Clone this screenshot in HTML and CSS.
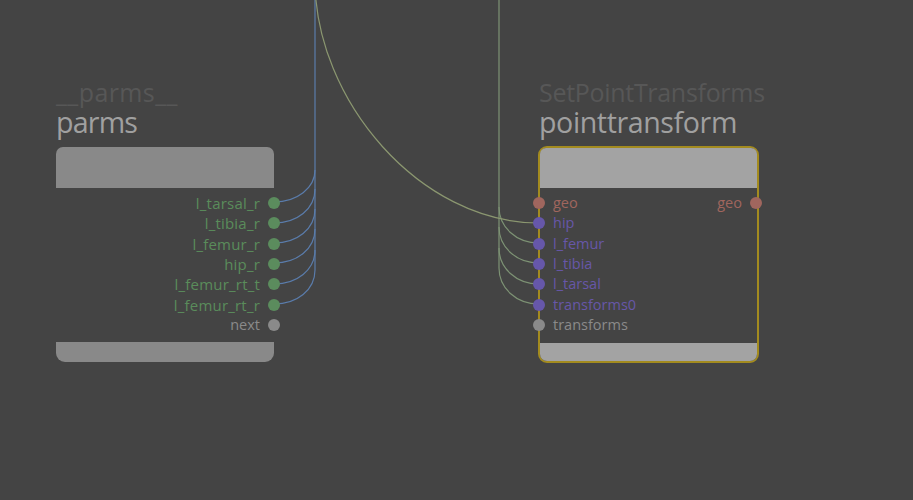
FILE: index.html
```html
<!DOCTYPE html>
<html>
<head>
<meta charset="utf-8">
<link rel="stylesheet" href="styles.css">
</head>
<body>
<div class="canvas">
  <svg class="wires" width="913" height="500" viewBox="0 0 913 500">
    <g class="wire-blue">
      <path d="M315,0 L315,170 C315,188 297,202 274,202"/>
      <path d="M315,170 L315,189 C315,209 297,223 274,223"/>
      <path d="M315,189 L315,209 C315,229 297,243 274,243"/>
      <path d="M315,209 L315,229 C315,249 297,263 274,263"/>
      <path d="M315,229 L315,250 C315,270 297,284 274,284"/>
      <path d="M315,250 L315,270 C315,290 297,304 274,304"/>
    </g>
    <g class="wire-green">
      <path d="M499,0 L499,207 C499,227 516,243 539,243"/>
      <path d="M499,207 L499,227 C499,247 516,263 539,263"/>
      <path d="M499,227 L499,248 C499,268 516,284 539,284"/>
      <path d="M499,248 L499,268 C499,288 516,304 539,304"/>
    </g>
    <path class="wire-hip" d="M315,-20 C315,100 420,223 539,223"/>
  </svg>

  <div class="node node-parms">
    <div class="node-type">__parms__</div>
    <div class="node-name">parms</div>
    <div class="node-body">
      <div class="node-head"></div>
      <div class="ports ports-out">
        <div class="port green">l_tarsal_r<span class="dot"></span></div>
        <div class="port green">l_tibia_r<span class="dot"></span></div>
        <div class="port green">l_femur_r<span class="dot"></span></div>
        <div class="port green">hip_r<span class="dot"></span></div>
        <div class="port green">l_femur_rt_t<span class="dot"></span></div>
        <div class="port green">l_femur_rt_r<span class="dot"></span></div>
        <div class="port grey">next<span class="dot"></span></div>
      </div>
      <div class="node-foot"></div>
    </div>
  </div>

  <div class="node node-pt">
    <div class="node-type">SetPointTransforms</div>
    <div class="node-name">pointtransform</div>
    <div class="node-body selected">
      <div class="node-head"></div>
      <div class="ports ports-in">
        <div class="port red"><span class="dot"></span>geo<span class="spacer"></span>geo<span class="dot dot-out"></span></div>
        <div class="port purple"><span class="dot"></span>hip</div>
        <div class="port purple"><span class="dot"></span>l_femur</div>
        <div class="port purple"><span class="dot"></span>l_tibia</div>
        <div class="port purple"><span class="dot"></span>l_tarsal</div>
        <div class="port purple"><span class="dot"></span>transforms0</div>
        <div class="port grey"><span class="dot"></span>transforms</div>
      </div>
      <div class="node-foot"></div>
    </div>
  </div>
</div>
</body>
</html>
```

FILE: styles.css
```css
html, body {
  margin: 0;
  padding: 0;
  background: #444444;
}
body {
  font-family: "Open Sans", "Noto Sans", sans-serif;
  overflow: hidden;
}
.canvas {
  position: relative;
  width: 913px;
  height: 500px;
  background: #444444;
  overflow: hidden;
}
.wires {
  position: absolute;
  left: 0;
  top: 0;
}
.wires path {
  fill: none;
  stroke-width: 1.2;
}
.wire-blue path { stroke: #5a7cab; }
.wire-green path { stroke: #7d9274; }
.wire-hip { stroke: #8b9770; }

.node {
  position: absolute;
  display: flex;
  flex-direction: column;
}
.node-parms {
  left: 56px;
  top: 77px;
  width: 218px;
}
.node-pt {
  left: 538px;
  top: 77px;
  width: 221px;
}
.node-type {
  font-size: 25px;
  line-height: 30px;
  height: 30px;
  color: #575757;
  white-space: nowrap;
  letter-spacing: -0.3px;
}
.node-parms .node-type {
  letter-spacing: 0.4px;
}
.node-name {
  font-size: 28.6px;
  line-height: 30px;
  height: 40px;
  color: #a0a0a0;
  white-space: nowrap;
  letter-spacing: -0.4px;
}
.node-parms .node-name {
  letter-spacing: -0.8px;
}
.node-pt .node-type,
.node-pt .node-name {
  padding-left: 1px;
}
.node-body {
  display: flex;
  flex-direction: column;
}
.node-head {
  height: 41px;
  background: #898989;
  border-radius: 7px 7px 0 0;
}
.node-foot {
  height: 20px;
  background: #898989;
  border-radius: 0 0 9px 9px;
}
.ports {
  display: flex;
  flex-direction: column;
  padding: 5px 0 7px 0;
}
.port {
  position: relative;
  height: 20.33px;
  line-height: 20px;
  font-size: 14.5px;
  display: flex;
  align-items: center;
  white-space: nowrap;
}
.ports-out .port {
  justify-content: flex-end;
  padding-right: 14px;
}
.ports-out .green {
  font-size: 15px;
  letter-spacing: 0.2px;
}
.ports-out .dot {
  position: absolute;
  right: -6px;
  top: 4px;
}
.dot {
  display: block;
  width: 12px;
  height: 12px;
  border-radius: 50%;
}
.green { color: #5a8c5b; }
.green .dot { background: #5b8c5d; }
.grey { color: #8a8a8a; }
.grey .dot { background: #8a8a8a; }
.red { color: #a0665e; }
.red .dot { background: #a0665e; }
.purple { color: #6757a8; }
.purple .dot { background: #6657aa; }

.selected {
  border: 2px solid #a38b1f;
  border-radius: 9px;
  margin-top: -1px;
}
.selected .node-head {
  height: 40px;
  background: #a3a3a3;
  border-radius: 6px 6px 0 0;
}
.selected .node-foot {
  height: 18px;
  background: #a3a3a3;
  border-radius: 0 0 7px 7px;
}
.selected .ports {
  padding: 5px 0 8px 0;
}
.ports-in .port {
  padding-left: 13px;
}
.ports-in .dot {
  position: absolute;
  left: -7px;
  top: 4px;
}
.ports-in .dot-out {
  left: auto;
  right: -5px;
}
.spacer {
  flex: 1;
}
.ports-in .red {
  padding-right: 15px;
}
```
